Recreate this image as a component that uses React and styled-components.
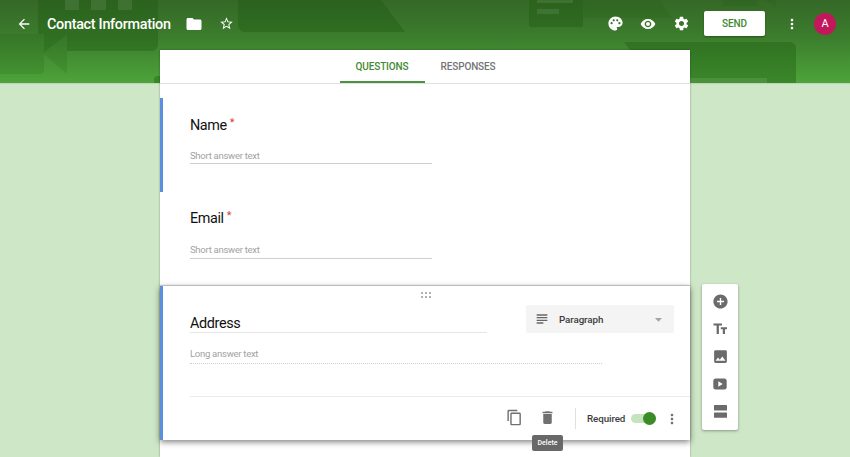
import React from "react";
import styled, { createGlobalStyle, css } from "styled-components";
import {
  MdArrowBack, MdFolder, MdStarBorder, MdPalette, MdVisibility, MdSettings, MdMoreVert,
  MdSubject, MdArrowDropDown, MdContentCopy, MdDelete, MdAddCircle, MdImage,
} from "react-icons/md";

const Global = createGlobalStyle`
  * { box-sizing: border-box; }
  body { margin: 0; font-family: Roboto, "Liberation Sans", sans-serif; background: #cee7c7; }
`;

const Page = styled.div`
  height: 457px;
  overflow: hidden;
  background: #cee7c7;
`;

const Banner = styled.header`
  position: relative;
  height: 83px;
  background: linear-gradient(#356827 0%, #3c7d2d 45%, #4da43a 100%);
  box-shadow: 0 1px 1px rgba(0, 0, 0, 0.08);
`;

const BannerArt = styled.svg`
  position: absolute;
  inset: 0;
  display: block;
`;

const AppBar = styled.div`
  position: relative;
  display: flex;
  align-items: center;
  height: 47px;
  padding: 0 14px 0 16px;
  color: #fff;
`;

const Icon = styled.span`
  display: flex;
  align-items: center;
  justify-content: center;
  flex: none;
  width: 16px;
  color: ${(p) => p.$color || "inherit"};
  margin-left: ${(p) => p.$gap || 0}px;
  svg { display: block; flex: none; }
`;

const FormTitle = styled.h1`
  margin: 0 0 0 15px;
  padding-top: 2px;
  width: 124px;
  font-size: 14.4px;
  letter-spacing: -0.3px;
  line-height: 20px;
  font-weight: 500;
  white-space: nowrap;
`;

const Spacer = styled.div`
  flex: 1;
`;

const SendButton = styled.button`
  margin-left: 15px;
  width: 61px;
  height: 25px;
  padding: 0;
  border: 0;
  border-radius: 2px;
  background: #fff;
  color: #3f8a30;
  font: 500 10px Roboto, sans-serif;
  letter-spacing: -0.1px;
  box-shadow: 0 1px 2px rgba(0, 0, 0, 0.35);
`;

const Avatar = styled.div`
  margin-left: 14px;
  width: 22px;
  height: 22px;
  border-radius: 50%;
  background: #c2185b;
  font-size: 11px;
  line-height: 22px;
  text-align: center;
`;

const Workspace = styled.div`
  position: relative;
  display: flex;
  align-items: flex-start;
  margin: -33px 0 0 160px;
`;

const Paper = styled.main`
  width: 530px;
  height: 407px;
  background: #fff;
  box-shadow: 0 0 2px rgba(0, 0, 0, 0.35);
`;

const Tabs = styled.nav`
  display: flex;
  justify-content: center;
  height: 34px;
  padding-left: 1px;
  border-bottom: 1px solid #e2e2e2;
`;

const Tab = styled.div`
  width: ${(p) => p.$width}px;
  height: 33px;
  text-align: center;
  font-size: 10px;
  letter-spacing: -0.15px;
  line-height: 33px;
  font-weight: 500;
  color: ${(p) => (p.$active ? "#3f8a30" : "#757575")};
  ${(p) => p.$active && css`box-shadow: inset 0 -2px #4a9440;`}
`;

const Question = styled.section`
  height: 94px;
  padding: ${(p) => p.$pad}px 0 0 27px;
  border-left: 3px solid ${(p) => (p.$marked ? "#5c8fdf" : "transparent")};
  margin-top: ${(p) => p.$top || 0}px;
`;

const QuestionTitle = styled.div`
  display: flex;
  font-size: 14.4px;
  letter-spacing: -0.4px;
  line-height: 20px;
  color: #111;
`;

const Star = styled.span`
  margin-left: 3px;
  font-size: 11px;
  line-height: 13px;
  color: #db4437;
`;

const Answer = styled.div`
  width: ${(p) => p.$width}px;
  height: ${(p) => p.$height || 18}px;
  margin-top: ${(p) => p.$top}px;
  font-size: 9.5px;
  letter-spacing: -0.27px;
  line-height: ${(p) => p.$leading || 19}px;
  color: #a2a2a2;
  border-bottom: 1px ${(p) => p.$line || "solid"} #cfcfcf;
`;

const ActiveCard = styled.section`
  position: relative;
  height: 154px;
  padding: 0 16px 0 27px;
  border-left: 3px solid #5c8fdf;
  background: #fff;
  box-shadow: 0 -1px 1px rgba(0, 0, 0, 0.18), 0 2px 6px rgba(0, 0, 0, 0.5);
`;

const DragHandle = styled.div`
  display: grid;
  grid-template-columns: repeat(3, 2px);
  gap: 2px;
  padding: 6px 0 0 231px;
  height: 19px;
  align-content: start;
`;

const Dot = styled.i`
  width: 2px;
  height: 2px;
  background: #b0b0b0;
`;

const EditRow = styled.div`
  display: flex;
  justify-content: space-between;
`;

const TitleField = styled.div`
  width: 297px;
  height: 28px;
  padding-top: 10px;
  font-size: 14.4px;
  letter-spacing: -0.35px;
  line-height: 18px;
  color: #111;
  border-bottom: 1px solid #e6e6e6;
`;

const TypeSelect = styled.div`
  display: flex;
  align-items: center;
  width: 148px;
  height: 28px;
  padding: 0 8px;
  border-radius: 2px;
  background: #f4f4f4;
  color: #3c3c3c;
  font-size: 9.8px;
  letter-spacing: -0.1px;
  font-weight: 500;
`;

const TypeLabel = styled.span`
  flex: 1;
  margin-left: 9px;
  padding-top: 1px;
`;

const Toolbar = styled.div`
  display: flex;
  align-items: center;
  justify-content: flex-end;
  height: 44px;
  margin: 32px -16px 0 0;
  padding-right: 10px;
  border-top: 1px solid #ebebeb;
  color: #707070;
`;

const ActionGroup = styled.div`
  display: flex;
  align-items: center;
  gap: 17px;
  padding-bottom: 2px;
`;

const Divider = styled.div`
  width: 1px;
  height: 21px;
  margin-left: 20px;
  background: #e0e0e0;
`;

const RequiredLabel = styled.span`
  margin-left: 11px;
  width: 39px;
  font-size: 9.8px;
  letter-spacing: -0.1px;
  font-weight: 500;
  color: #3c3c3c;
`;

const Switch = styled.div`
  display: flex;
  align-items: center;
  justify-content: flex-end;
  width: 25px;
  height: 9px;
  margin-left: 5px;
  border-radius: 5px;
  background: #c5e3bf;
`;

const Knob = styled.div`
  flex: none;
  width: 13px;
  height: 13px;
  border-radius: 50%;
  background: #3a8c28;
`;

const DeleteWrap = styled.div`
  position: relative;
`;

const Tooltip = styled.div`
  position: absolute;
  left: -7px;
  top: 26px;
  width: 31px;
  height: 16px;
  border-radius: 2px;
  background: #686868;
  color: #fff;
  font-size: 7px;
  line-height: 16px;
  font-weight: 500;
  text-align: center;
`;

const SideTools = styled.aside`
  display: grid;
  grid-auto-rows: 27.6px;
  place-items: center;
  width: 36px;
  height: 146px;
  margin: 234px 0 0 12px;
  padding-top: 3.5px;
  border-radius: 2px;
  background: #fff;
  color: #6b6b6b;
  box-shadow: 0 1px 3px rgba(0, 0, 0, 0.35);
`;

const BannerPattern = () => (
  <BannerArt width="850" height="83" viewBox="0 0 850 83">
    <g fill="#1d5a10" fillOpacity=".38">
      <path d="M38 0H158V45a6 6 0 0 1-6 6H67V34L44 53V34H38Z" />
      <path d="M238 0H381L405 32H245a7 7 0 0 1-7-7Z" />
      <path d="M529 0H583V25a2 2 0 0 1-2 2H531a2 2 0 0 1-2-2Z" />
      <path d="M624 42H790a6 6 0 0 1 6 6V83H655Z" />
      <path d="M154 83V80a4 4 0 0 1 4-4H164V83Z" />
    </g>
    <g fill="#1d5a10" fillOpacity=".15">
      <path d="M0 34H40a4 4 0 0 1 4 4V70a4 4 0 0 1-4 4H0Z" />
      <path d="M67 34V74L44 54Z" />
      <path d="M583 0H660L672 18H583Z" />
      <path d="M722 0H758V6H722ZM765 0H776V7Z" />
    </g>
    <g fill="#fff" fillOpacity=".09">
      <path d="M65 0H79V10H65ZM91 0H106V10H91ZM118 0H132V10H118ZM537 0H573V3H537ZM537 9H559V14H537ZM690 78H767V83H690Z" />
    </g>
  </BannerArt>
);

const TextSizeIcon = () => (
  <svg width="15" height="13" viewBox="0 0 15 13" fill="currentColor">
    <path d="M.5 1.5H9V3.6H5.9V12H3.6V3.6H.5ZM7.8 5.3H14V7.3H12V12H9.8V7.3H7.8Z" />
  </svg>
);

const VideoIcon = () => (
  <svg width="14" height="12" viewBox="0 0 14 12">
    <rect x=".3" y=".5" width="13.4" height="11" rx="2.5" fill="currentColor" />
    <path d="M5.3 3.2V8.8L9.7 6Z" fill="#fff" />
  </svg>
);

const SectionIcon = () => (
  <svg width="13" height="13" viewBox="0 0 13 13" fill="currentColor">
    <rect width="13" height="5.4" y="0" rx=".5" />
    <rect width="13" height="5.4" y="7.4" rx=".5" />
  </svg>
);

export default function App() {
  return (
    <Page>
      <Global />
      <Banner>
        <BannerPattern />
        <AppBar>
          <Icon><MdArrowBack size={16} /></Icon>
          <FormTitle>Contact Information</FormTitle>
          <Icon $gap={14.5}><MdFolder size={18} /></Icon>
          <Icon $gap={17}><MdStarBorder size={15} /></Icon>
          <Spacer />
          <Icon><MdPalette size={17} /></Icon>
          <Icon $gap={17}><MdVisibility size={16} /></Icon>
          <Icon $gap={17}><MdSettings size={17} /></Icon>
          <SendButton>SEND</SendButton>
          <Icon $gap={19}><MdMoreVert size={16} /></Icon>
          <Avatar>A</Avatar>
        </AppBar>
      </Banner>
      <Workspace>
        <Paper>
          <Tabs>
            <Tab $active $width={85}>QUESTIONS</Tab>
            <Tab $width={87}>RESPONSES</Tab>
          </Tabs>
          <Question $marked $top={14} $pad={18}>
            <QuestionTitle>Name<Star>*</Star></QuestionTitle>
            <Answer $width={242} $top={10}>Short answer text</Answer>
          </Question>
          <Question $pad={17}>
            <QuestionTitle>Email<Star>*</Star></QuestionTitle>
            <Answer $width={242} $top={11} $height={19}>Short answer text</Answer>
          </Question>
          <ActiveCard>
            <DragHandle><Dot /><Dot /><Dot /><Dot /><Dot /><Dot /></DragHandle>
            <EditRow>
              <TitleField>Address</TitleField>
              <TypeSelect>
                <Icon $color="#666"><MdSubject size={16} /></Icon>
                <TypeLabel>Paragraph</TypeLabel>
                <Icon $color="#a5a5a5"><MdArrowDropDown size={17} /></Icon>
              </TypeSelect>
            </EditRow>
            <Answer $width={412} $top={12} $height={19} $leading={17} $line="dotted">Long answer text</Answer>
            <Toolbar>
              <ActionGroup>
                <Icon><MdContentCopy size={17} /></Icon>
                <DeleteWrap>
                  <Icon><MdDelete size={17} /></Icon>
                  <Tooltip>Delete</Tooltip>
                </DeleteWrap>
              </ActionGroup>
              <Divider />
              <RequiredLabel>Required</RequiredLabel>
              <Switch><Knob /></Switch>
              <Icon $gap={8}><MdMoreVert size={16} /></Icon>
            </Toolbar>
          </ActiveCard>
        </Paper>
        <SideTools>
          <MdAddCircle size={17} />
          <TextSizeIcon />
          <MdImage size={17} />
          <VideoIcon />
          <SectionIcon />
        </SideTools>
      </Workspace>
    </Page>
  );
}
